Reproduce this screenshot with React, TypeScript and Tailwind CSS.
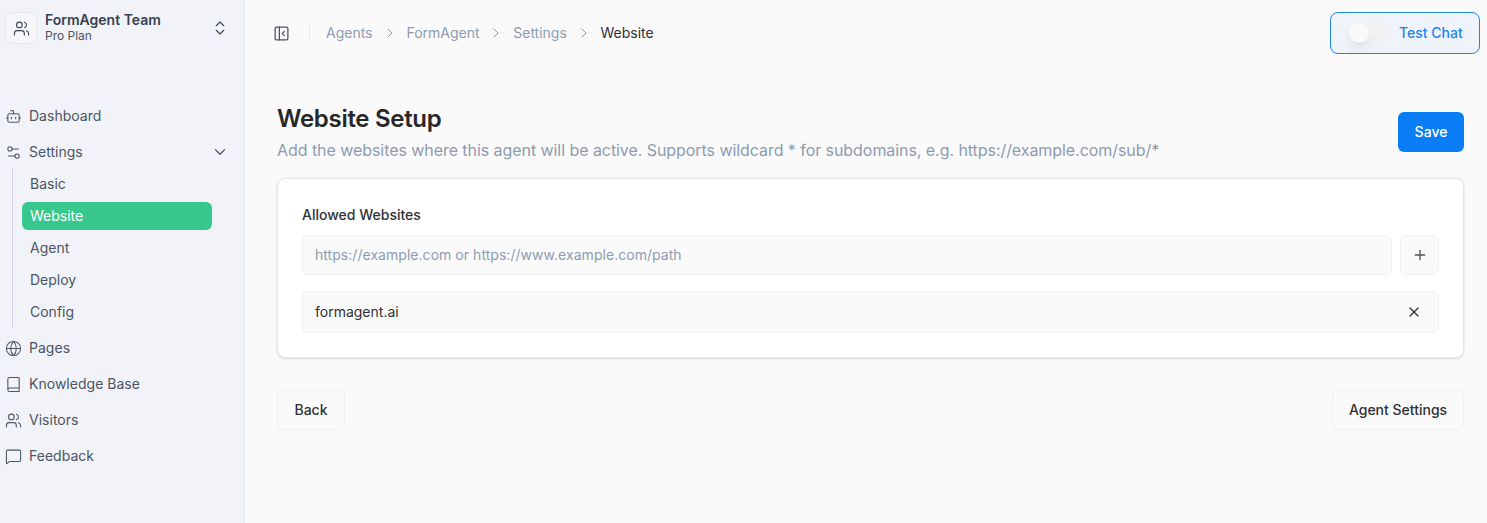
import { Book, Bot, ChevronDown, ChevronRight, ChevronsUpDown, Globe, MessageSquare, PanelLeftClose, Plus, Settings2, Users, X } from "lucide-react"

const subItems = ["Basic", "Website", "Agent", "Deploy", "Config"]

function NavItem({ icon: Icon, label, arrow }: { icon: typeof Bot; label: string; arrow?: boolean }) {
    return (
        <div className="flex h-9 items-center pl-[5px] pr-[15px] text-[#4b5563]">
            <Icon className="h-[17px] w-[17px] shrink-0" strokeWidth={1.5} />
            <span className="ml-[7px] flex-1 text-sm tracking-[0.02px]">{label}</span>
            {arrow && <ChevronDown className="h-[18px] w-[18px]" strokeWidth={1.6} />}
        </div>
    )
}

function Sidebar() {
    return (
        <aside className="w-[245px] shrink-0 border-r border-[#e2e5eb] bg-[#f1f3f8]">
            <div className="flex items-center pl-[5px] pr-[15px] pt-3">
                <div className="flex h-[32px] w-[32px] items-center justify-center rounded-lg border border-[#e5e7eb] bg-[#f6f7f9] text-[#374151]">
                    <Users className="h-[17px] w-[17px]" strokeWidth={1.5} />
                </div>
                <div className="-mt-[2px] ml-2 flex-1">
                    <p className="text-sm font-semibold leading-[17px] text-[#374151]">FormAgent Team</p>
                    <p className="text-xs leading-[15px] text-[#4b5563]">Pro Plan</p>
                </div>
                <ChevronsUpDown className="h-[18px] w-[18px] text-[#374151]" strokeWidth={1.5} />
            </div>
            <nav className="mt-[54px]">
                <NavItem icon={Bot} label="Dashboard" />
                <NavItem icon={Settings2} label="Settings" arrow />
                <div className="-mt-[2px] mb-[2px] ml-3 w-[200px] border-l border-[#d3d8e2] pl-[9px]">
                    {subItems.map((item) => (
                        <div key={item} className="flex h-8 items-center">
                            <div
                                className={
                                    item === "Website"
                                        ? "flex h-7 w-[190px] items-center rounded-md bg-[#38c88d] pl-2 text-sm text-white"
                                        : "flex h-7 w-[190px] items-center pl-2 text-sm text-[#4b5563]"
                                }
                            >
                                {item}
                            </div>
                        </div>
                    ))}
                </div>
                <NavItem icon={Globe} label="Pages" />
                <NavItem icon={Book} label="Knowledge Base" />
                <NavItem icon={Users} label="Visitors" />
                <NavItem icon={MessageSquare} label="Feedback" />
            </nav>
        </aside>
    )
}

function Header() {
    return (
        <header className="flex h-[66px] items-center pl-[28px] pr-[7px]">
            <PanelLeftClose className="h-[17px] w-[17px] text-[#4b5563]" strokeWidth={1.8} />
            <div className="ml-[19px] h-4 w-px bg-[#e5e7eb]" />
            <div className="ml-4 flex flex-1 items-center text-sm text-[#8e9ab0]">
                <span>Agents</span>
                <ChevronRight className="mx-[9px] h-4 w-4" strokeWidth={1.5} />
                <span>FormAgent</span>
                <ChevronRight className="mx-[8.8px] h-4 w-4" strokeWidth={1.5} />
                <span>Settings</span>
                <ChevronRight className="mx-[8.8px] h-4 w-4" strokeWidth={1.5} />
                <span className="text-[#303136]">Website</span>
            </div>
            <button className="flex h-[42px] w-[150px] items-center rounded-lg border border-[#1c85f0] bg-[#eff4fb] pl-[14px]">
                <span className="flex h-6 w-[46px] items-center rounded-full bg-[#f1f2f4] pl-[4px]">
                    <span className="h-5 w-5 rounded-full bg-[#fafafa] shadow-lg" />
                </span>
                <span className="ml-[8px] text-sm font-medium text-[#1c85f0]">Test Chat</span>
            </button>
        </header>
    )
}

export default function App() {
    return (
        <div className="flex h-screen bg-[#fafafa] font-['Inter',sans-serif]">
            <Sidebar />
            <main className="min-w-0 flex-1">
                <Header />
                <div className="pl-8 pr-[23px] pt-[37px]">
                    <div className="flex items-start justify-between">
                        <div>
                            <h1 className="text-2xl font-semibold leading-[32px] tracking-[-0.3px] text-[#27272a]">Website Setup</h1>
                            <p className="mt-[3px] text-base leading-6 tracking-[-0.06px] text-[#8e9ab0]">
                                Add the websites where this agent will be active. Supports wildcard * for subdomains, e.g. https://example.com/sub/*
                            </p>
                        </div>
                        <button className="mt-[9px] h-10 w-[66px] rounded-md bg-[#0a7ff5] text-sm font-medium text-white">Save</button>
                    </div>
                    <section className="mt-[16px] rounded-lg border border-[#e2e5ec] bg-white px-6 pb-[24px] pt-[26px] shadow-sm">
                        <p className="text-sm font-medium leading-5 text-[#303136]">Allowed Websites</p>
                        <div className="mt-[10px] flex gap-2">
                            <div className="flex h-10 flex-1 items-center rounded-md border border-[#f0f0f2] bg-[#fafafa] px-3 text-sm tracking-[0.04px] text-[#8e9ab0]">
                                https://example.com or https://www.example.com/path
                            </div>
                            <button className="flex h-10 w-[39px] items-center justify-center rounded-md border border-[#f0f0f2] bg-[#fafafa] text-[#52525b]">
                                <Plus className="h-4 w-4" />
                            </button>
                        </div>
                        <div className="mt-4 flex h-[42px] items-center justify-between rounded-md border border-[#f0f0f2] bg-[#fafafa] pl-3 pr-4 text-sm text-[#303136]">
                            <span>formagent.ai</span>
                            <X className="h-4 w-4" strokeWidth={1.8} />
                        </div>
                    </section>
                    <div className="mt-8 flex justify-between">
                        <button className="h-10 w-[68px] rounded-md border border-[#f0f0f2] bg-[#fafafa] text-sm font-medium text-[#303136]">Back</button>
                        <button className="h-10 w-[132px] rounded-md border border-[#f0f0f2] bg-[#fafafa] text-sm font-medium text-[#303136]">Agent Settings</button>
                    </div>
                </div>
            </main>
        </div>
    )
}
